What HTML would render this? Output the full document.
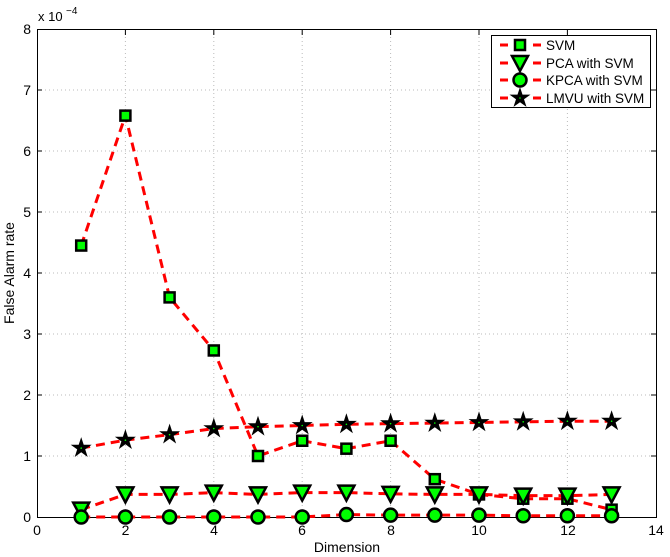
<!DOCTYPE html><html><head><style>body{margin:0;background:#fff}svg{display:block;font-family:"Liberation Sans",sans-serif}</style></head><body>
<svg id="s" width="670" height="557" xmlns="http://www.w3.org/2000/svg">
<rect width="670" height="557" fill="#fff"/>
<g id="grid" stroke="#bbb" stroke-dasharray="1,3" stroke-width="1"></g>
<rect x="37.5" y="29.5" width="619" height="488" fill="none" stroke="#000" stroke-width="1"/>
<g id="ticks" stroke="#000"></g>
<g font-size="14" fill="#000">
<text x="31" y="522" text-anchor="end">0</text><text x="31" y="461" text-anchor="end">1</text><text x="31" y="400" text-anchor="end">2</text><text x="31" y="339" text-anchor="end">3</text><text x="31" y="278" text-anchor="end">4</text><text x="31" y="217" text-anchor="end">5</text><text x="31" y="156" text-anchor="end">6</text><text x="31" y="95" text-anchor="end">7</text><text x="31" y="34" text-anchor="end">8</text>
<text x="37" y="535" text-anchor="middle">0</text><text x="125.5" y="535" text-anchor="middle">2</text><text x="214" y="535" text-anchor="middle">4</text><text x="302" y="535" text-anchor="middle">6</text><text x="391" y="535" text-anchor="middle">8</text><text x="479" y="535" text-anchor="middle">10</text><text x="568" y="535" text-anchor="middle">12</text><text x="656" y="535" text-anchor="middle">14</text>
<text x="347" y="552" text-anchor="middle">Dimension</text>
<text x="14" y="273" text-anchor="middle" transform="rotate(-90 14 273)">False Alarm rate</text>
<text x="38" y="21" font-size="13">x 10</text><text x="66" y="14" font-size="10">−4</text>
</g>
<g id="plot"></g>
<rect x="491.5" y="35.5" width="159" height="72" fill="#fff" stroke="#000"/>
<g id="leg"></g>
<g font-size="13.5"><text x="546" y="50">SVM</text><text x="546" y="68">PCA with SVM</text><text x="546" y="85">KPCA with SVM</text><text x="546" y="103">LMVU with SVM</text></g>
</svg>
<script>
var X=function(v){return 37+v*44.2},Y=function(v){return 517-v*61};
var ns="http://www.w3.org/2000/svg";
function el(p,t,a){var e=document.createElementNS(ns,t);for(var k in a)e.setAttribute(k,a[k]);p.appendChild(e);return e}
var g=document.getElementById('grid'),tk=document.getElementById('ticks'),pl=document.getElementById('plot'),lg=document.getElementById('leg');
for(var i=1;i<7;i++){el(g,'line',{x1:X(2*i),x2:X(2*i),y1:29,y2:517});el(tk,'line',{x1:X(2*i),x2:X(2*i),y1:517,y2:512});el(tk,'line',{x1:X(2*i),x2:X(2*i),y1:30,y2:35});}
for(i=1;i<8;i++){el(g,'line',{x1:37,x2:656,y1:Y(i),y2:Y(i)});el(tk,'line',{x1:37,x2:42,y1:Y(i),y2:Y(i)});el(tk,'line',{x1:656,x2:651,y1:Y(i),y2:Y(i)});}
var D=[[4.45,6.58,3.6,2.73,1.0,1.25,1.12,1.25,0.62,0.37,0.3,0.3,0.12],
[0.12,0.37,0.37,0.4,0.37,0.4,0.4,0.38,0.37,0.37,0.35,0.35,0.37],
[0,0,0,0,0,0,0.04,0.03,0.03,0.03,0.02,0.02,0.02],
[1.13,1.26,1.35,1.45,1.48,1.5,1.52,1.53,1.54,1.55,1.56,1.57,1.57]];
function mk(p,t,x,y){
 if(t==0)el(p,'rect',{x:x-5,y:y-5,width:10,height:10,fill:'#0f0',stroke:'#000','stroke-width':2.5});
 else if(t==1)el(p,'path',{d:'M'+(x-8)+' '+(y-7)+'L'+(x+8)+' '+(y-7)+'L'+x+' '+(y+8)+'Z',fill:'#0f0',stroke:'#000','stroke-width':2.5,'stroke-linejoin':'miter'});
 else if(t==2)el(p,'circle',{cx:x,cy:y,r:6.5,fill:'#0f0',stroke:'#000','stroke-width':2.5});
 else{var d='';for(var k=0;k<10;k++){var r=k%2?4.2:11,a=-Math.PI/2+k*Math.PI/5;d+=(k?'L':'M')+(x+r*Math.cos(a)).toFixed(1)+' '+(y+r*Math.sin(a)).toFixed(1)}el(p,'path',{d:d+'Z',fill:'#000'});el(p,'circle',{cx:x,cy:y,r:0.8,fill:'#0f0'});}
}
D.forEach(function(s,t){var pts=s.map(function(v,i){return X(i+1)+','+Y(v)}).join(' ');
 el(pl,'polyline',{points:pts,fill:'none',stroke:'#f00','stroke-width':3,'stroke-dasharray':'9,6'});});
D.forEach(function(s,t){s.forEach(function(v,i){mk(pl,t,X(i+1),Y(v))})});
[45,63,80,98].forEach(function(y,t){el(lg,'line',{x1:500,x2:508,y1:y,y2:y,stroke:'#f00','stroke-width':3});el(lg,'line',{x1:533,x2:541,y1:y,y2:y,stroke:'#f00','stroke-width':3});mk(lg,t,520,y)});
</script>
</body></html>
